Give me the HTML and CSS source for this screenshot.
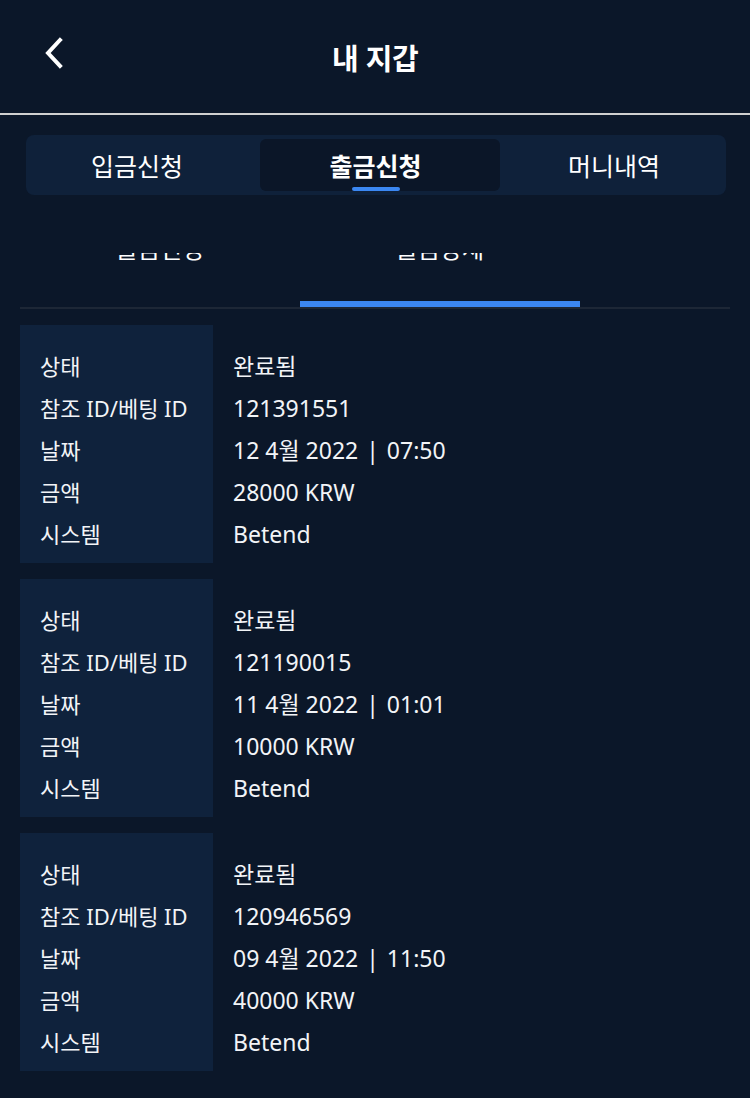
FILE: index.html
```html
<!DOCTYPE html>
<html lang="ko">
<head>
<meta charset="utf-8">
<title>내 지갑</title>
<link rel="stylesheet" href="styles.css">
</head>
<body>
<header class="topbar">
  <div class="topbar-side">
    <button class="back-btn" aria-label="뒤로">
      <svg width="20" height="32" viewBox="0 0 20 32"><path d="M16 3 L4 16 L16 29" fill="none" stroke="#fff" stroke-width="4" stroke-linecap="square"/></svg>
    </button>
  </div>
  <h1 class="topbar-title">내 지갑</h1>
  <div class="topbar-side"></div>
</header>

<nav class="main-tabs">
  <div class="main-tab tab-first">입금신청</div>
  <div class="main-tab main-tab-active"><span class="active-label">출금신청</span><span class="tab-indicator"></span></div>
  <div class="main-tab tab-last">머니내역</div>
</nav>

<nav class="sub-tabs">
  <div class="sub-tab"><span class="sub-label">출금신청</span></div>
  <div class="sub-tab sub-tab-active"><span class="sub-label">출금상세</span></div>
</nav>

<main class="records">
  <section class="record">
    <div class="record-labels">
      <div class="row">상태</div>
      <div class="row">참조 ID/베팅 ID</div>
      <div class="row">날짜</div>
      <div class="row">금액</div>
      <div class="row">시스템</div>
    </div>
    <div class="record-values">
      <div class="row">완료됨</div>
      <div class="row">121391551</div>
      <div class="row">12 4월 2022 <span class="sep">|</span> 07:50</div>
      <div class="row">28000 KRW</div>
      <div class="row">Betend</div>
    </div>
  </section>
  <section class="record">
    <div class="record-labels">
      <div class="row">상태</div>
      <div class="row">참조 ID/베팅 ID</div>
      <div class="row">날짜</div>
      <div class="row">금액</div>
      <div class="row">시스템</div>
    </div>
    <div class="record-values">
      <div class="row">완료됨</div>
      <div class="row">121190015</div>
      <div class="row">11 4월 2022 <span class="sep">|</span> 01:01</div>
      <div class="row">10000 KRW</div>
      <div class="row">Betend</div>
    </div>
  </section>
  <section class="record">
    <div class="record-labels">
      <div class="row">상태</div>
      <div class="row">참조 ID/베팅 ID</div>
      <div class="row">날짜</div>
      <div class="row">금액</div>
      <div class="row">시스템</div>
    </div>
    <div class="record-values">
      <div class="row">완료됨</div>
      <div class="row">120946569</div>
      <div class="row">09 4월 2022 <span class="sep">|</span> 11:50</div>
      <div class="row">40000 KRW</div>
      <div class="row">Betend</div>
    </div>
  </section>
</main>
</body>
</html>
```

FILE: styles.css
```css
* { box-sizing: border-box; }

html, body {
  margin: 0;
  padding: 0;
  background: #0b1729;
  color: #ffffff;
  font-family: "Noto Sans", "Noto Sans CJK KR", sans-serif;
}

body {
  width: 750px;
  height: 1098px;
  overflow: hidden;
}

.topbar {
  height: 115px;
  display: grid;
  grid-template-columns: 1fr auto 1fr;
  align-items: center;
  border-bottom: 2px solid #d0d0d0;
}

.topbar-side {
  display: flex;
  align-items: center;
}

.back-btn {
  margin: -8px 0 0 44px;
  padding: 0;
  background: none;
  border: 0;
  display: flex;
}

.topbar-title {
  margin: 0;
  font-family: "Noto Sans CJK KR", sans-serif;
  font-size: 29px;
  font-weight: 700;
  letter-spacing: -0.5px;
}

.main-tabs {
  margin: 20px 24px 0 26px;
  height: 60px;
  padding: 4px;
  background: #0f213a;
  border-radius: 8px;
  display: grid;
  grid-template-columns: 230px 240px 1fr;
}

.main-tab {
  display: flex;
  align-items: center;
  justify-content: center;
  font-family: "Noto Sans CJK KR", sans-serif;
  font-size: 25px;
  color: #ffffff;
  position: relative;
}

.tab-first { padding-right: 16px; }
.tab-last { padding-left: 6px; }

.main-tab-active {
  background: #0b1628;
  border-radius: 6px;
  font-weight: 700;
  padding-right: 9px;
}

.tab-indicator {
  position: absolute;
  bottom: 0;
  left: 92px;
  width: 48px;
  height: 4px;
  border-radius: 2px;
  background: #3b87f2;
}

.sub-tabs {
  margin: 58px 20px 0 20px;
  height: 56px;
  display: flex;
  border-bottom: 2px solid #1d2736;
  overflow: hidden;
}

.sub-tab {
  width: 280px;
  display: flex;
  justify-content: center;
  align-items: flex-start;
}

.sub-tab-active {
  border-bottom: 6px solid #3b87f2;
}

.sub-label {
  margin-top: -17px;
  font-family: "Noto Sans CJK KR", sans-serif;
  font-size: 24px;
  line-height: 24px;
}

.records {
  margin: 16px 20px 0 20px;
  display: flex;
  flex-direction: column;
  gap: 16px;
}

.record {
  height: 238px;
  display: grid;
  grid-template-columns: 193px 1fr;
}

.record-labels {
  background: #0f223c;
  padding: 20px 0 8px 20px;
}

.record-values {
  padding: 20px 0 8px 20px;
}

.row {
  height: 42px;
  line-height: 42px;
  font-size: 22px;
  white-space: nowrap;
  color: #f2f4f7;
}

.record-values .row {
  font-size: 23px;
}

.sep {
  margin: 0 2px;
}
```
